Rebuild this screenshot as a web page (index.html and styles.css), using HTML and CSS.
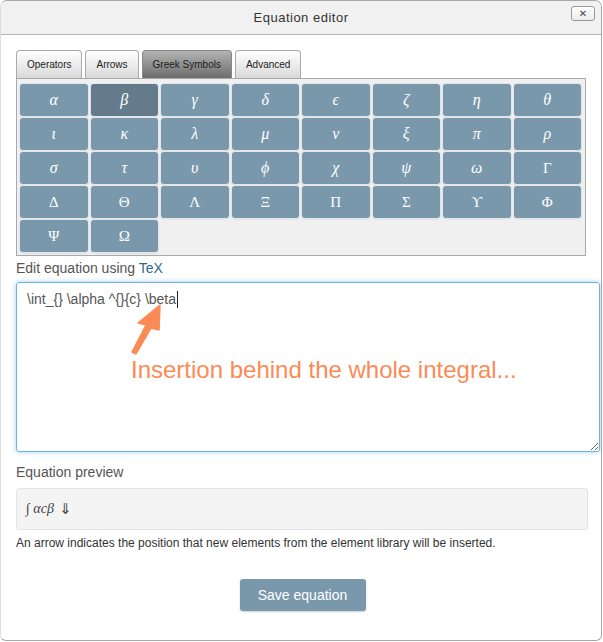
FILE: index.html
```html
<!DOCTYPE html>
<html lang="en">
<head>
    <meta charset="UTF-8">
    <meta name="viewport" content="width=device-width, initial-scale=1.0">
    <title>Equation editor</title>
    <link rel="stylesheet" href="styles.css">
</head>
<body>
    <div class="dialog">
        <div class="dialog-header">
            <span class="dialog-title">Equation editor</span>
            <button class="close-btn" type="button">&#x2715;</button>
        </div>
        <div class="dialog-body">
            <div class="tabs">
                <div class="tab">Operators</div>
                <div class="tab">Arrows</div>
                <div class="tab active">Greek Symbols</div>
                <div class="tab">Advanced</div>
            </div>
            <div class="symbol-panel">
                <div class="symbol">&alpha;</div>
                <div class="symbol selected">&beta;</div>
                <div class="symbol">&gamma;</div>
                <div class="symbol">&delta;</div>
                <div class="symbol">&#x03F5;</div>
                <div class="symbol">&zeta;</div>
                <div class="symbol">&eta;</div>
                <div class="symbol">&theta;</div>
                <div class="symbol">&iota;</div>
                <div class="symbol">&kappa;</div>
                <div class="symbol">&lambda;</div>
                <div class="symbol">&mu;</div>
                <div class="symbol">&nu;</div>
                <div class="symbol">&xi;</div>
                <div class="symbol">&pi;</div>
                <div class="symbol">&rho;</div>
                <div class="symbol">&sigma;</div>
                <div class="symbol">&tau;</div>
                <div class="symbol">&upsilon;</div>
                <div class="symbol">&#x03D5;</div>
                <div class="symbol">&chi;</div>
                <div class="symbol">&psi;</div>
                <div class="symbol">&omega;</div>
                <div class="symbol upright">&Gamma;</div>
                <div class="symbol upright">&Delta;</div>
                <div class="symbol upright">&Theta;</div>
                <div class="symbol upright">&Lambda;</div>
                <div class="symbol upright">&Xi;</div>
                <div class="symbol upright">&Pi;</div>
                <div class="symbol upright">&Sigma;</div>
                <div class="symbol upright">&#x03D2;</div>
                <div class="symbol upright">&Phi;</div>
                <div class="symbol upright">&Psi;</div>
                <div class="symbol upright">&Omega;</div>
            </div>

            <div class="field-label">Edit equation using <span class="tex-link">TeX</span></div>
            <div class="tex-wrap">
                <div class="tex-input">\int_{} \alpha ^{}{c} \beta<span class="caret"></span></div>
                <svg class="note-arrow" width="200" height="100" viewBox="0 0 200 100">
                    <polygon points="144,23 143,48 135,46 120,72 116,70 130,43 122,41" fill="#fb8b56" stroke="#fb8b56" stroke-width="1.5" stroke-linejoin="round"/>
                </svg>
                <div class="note-text">Insertion behind the whole integral...</div>
            </div>

            <div class="field-label preview-label">Equation preview</div>
            <div class="preview-box"><span class="preview-math">&int; &alpha;c&beta;</span> <span class="preview-arrow">&#x21D3;</span></div>
            <div class="help-text">An arrow indicates the position that new elements from the element library will be inserted.</div>

            <div class="actions">
                <button class="save-btn" type="button">Save equation</button>
            </div>
        </div>
    </div>
</body>
</html>
```

FILE: styles.css
```css
body {
    margin: 0;
    padding: 0;
    background-color: #fff;
    font-family: "Liberation Sans", Arial, sans-serif;
}

.dialog {
    width: 602px;
    height: 641px;
    box-sizing: border-box;
    border: 1px solid #a8a8a8;
    border-left-color: #ddd;
    border-radius: 7px 7px 6px 6px;
    background-color: #fff;
    overflow: hidden;
}

.dialog-header {
    position: relative;
    height: 33px;
    background-color: #f1f1f1;
    border-bottom: 1px solid #b4b4b4;
    display: flex;
    align-items: center;
    justify-content: center;
}

.dialog-title {
    font-size: 13px;
    letter-spacing: 0.5px;
    color: #333;
}

.close-btn {
    position: absolute;
    top: 5px;
    right: 6px;
    width: 24px;
    height: 15px;
    padding: 0;
    border: 1px solid #9a9a9a;
    border-radius: 3px;
    background: linear-gradient(#fff, #ececec);
    font-size: 10px;
    font-weight: bold;
    line-height: 12px;
    color: #444;
    font-family: "DejaVu Sans", sans-serif;
}

.dialog-body {
    padding: 15px 16px 0 15px;
}

.tabs {
    display: flex;
    height: 28px;
}

.tab {
    height: 27px;
    line-height: 27px;
    padding: 0 10px;
    margin-right: 3px;
    font-size: 10px;
    color: #222;
    border: 1px solid #aaa;
    border-bottom: none;
    border-radius: 4px 4px 0 0;
    background: linear-gradient(#fff, #d9d9d9);
}

.tab.active {
    background: linear-gradient(#b3b3b3, #6d6d6d);
    border-color: #888;
    color: #1c1c1c;
}

.symbol-panel {
    display: grid;
    grid-template-columns: repeat(8, 1fr);
    grid-auto-rows: 32px;
    gap: 2px 3px;
    width: 570px;
    box-sizing: border-box;
    padding: 5px 4px 3px 3px;
    border: 1px solid #a9a9a9;
    background-color: #f0f0f0;
}

.symbol {
    display: flex;
    align-items: center;
    justify-content: center;
    background-color: #7a98ac;
    border-radius: 3px;
    box-shadow: 0 0 0 1px #e2e6e9, 0 1px 2px rgba(0, 0, 0, 0.15);
    color: #fff;
    font-family: "Liberation Serif", "Times New Roman", serif;
    font-style: italic;
    font-size: 16px;
}

.symbol.upright {
    font-style: normal;
    font-size: 15px;
}

.symbol.selected {
    background-color: #637b8a;
}

.field-label {
    margin-top: 2px;
    font-size: 14px;
    line-height: 20px;
    color: #555;
}

.tex-link {
    color: #2d6b8e;
}

.tex-wrap {
    position: relative;
    margin-top: 4px;
    width: 584px;
}

.tex-input {
    height: 154px;
    padding: 7px 10px;
    border: 1px solid #6db1ea;
    border-radius: 3px;
    box-shadow: 0 0 5px rgba(102, 175, 233, 0.6);
    font-size: 14px;
    line-height: 18px;
    color: #555;
    resize: vertical;
    overflow: auto;
}

.caret {
    display: inline-block;
    width: 1px;
    height: 17px;
    margin-left: 1px;
    vertical-align: -4px;
    background-color: #222;
}

.note-arrow {
    position: absolute;
    left: 0;
    top: 0;
}

.note-text {
    position: absolute;
    left: 115px;
    top: 74px;
    font-size: 24px;
    line-height: 28px;
    color: #fb8b56;
    font-family: "Liberation Sans", Helvetica, sans-serif;
}

.preview-label {
    margin-top: 10px;
}

.preview-box {
    margin-top: 6px;
    width: 570px;
    height: 40px;
    border: 1px solid #e4e4e4;
    border-radius: 3px;
    background-color: #f4f4f4;
    display: flex;
    align-items: center;
    font-family: "Liberation Serif", "Times New Roman", serif;
    font-size: 14px;
    color: #444;
}

.preview-math {
    margin-left: 9px;
    font-style: italic;
}

.preview-arrow {
    margin-left: 5px;
    font-family: "DejaVu Sans", sans-serif;
    font-size: 15px;
}

.help-text {
    margin-top: 5px;
    font-size: 12px;
    line-height: 16px;
    color: #333;
}

.actions {
    display: flex;
    justify-content: center;
    margin-top: 28px;
    padding-left: 4px;
}

.save-btn {
    width: 126px;
    height: 32px;
    border: none;
    border-radius: 3px;
    background-color: #7a98ac;
    box-shadow: 0 1px 2px rgba(0, 0, 0, 0.2);
    color: #fff;
    font-size: 14px;
    font-family: "Liberation Sans", Arial, sans-serif;
    cursor: pointer;
}
```
